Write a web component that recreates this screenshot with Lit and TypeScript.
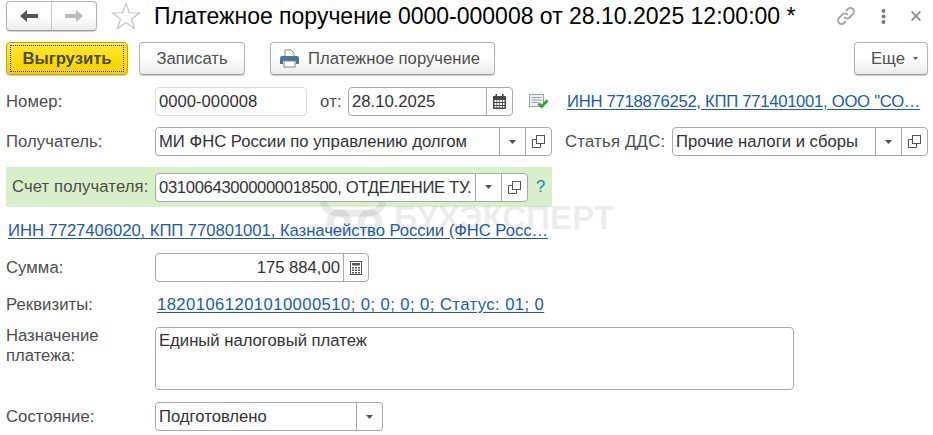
import { LitElement, html, css } from "lit";
import { customElement } from "lit/decorators.js";

const caret = html`<svg width="7" height="4" viewBox="0 0 7 4"><path d="M0 0h7L3.500 4z" fill="#555"/></svg>`;
const smallCaret = html`<svg width="5" height="3" viewBox="0 0 5 3"><path d="M0 0h5L2.500 3z" fill="#555"/></svg>`;
const openIcon = html`<svg width="13" height="13" viewBox="0 0 13 13" fill="none" stroke="#555" stroke-width="1"><path d="M4.500 4.500H.5v8h8V8.500"/><rect x="4.500" y=".5" width="8" height="8" fill="#fff"/></svg>`;
const calIcon = html`<svg width="13" height="15" viewBox="0 0 13 15"><path d="M2.500 0h1.600v2H9V0h1.600v2H12a1 1 0 0 1 1 1v11a1 1 0 0 1-1 1H1a1 1 0 0 1-1-1V3a1 1 0 0 1 1-1h1.500z" fill="#444"/><path d="M1.500 6h2v2h-2zM4.300 6h2v2h-2zM7 6h2v2H7zM9.800 6h1.800v2H9.800zM1.500 9h2v2h-2zM4.300 9h2v2h-2zM7 9h2v2H7zM9.800 9h1.800v2H9.800zM1.500 12h2v1.600h-2zM4.300 12h2v1.600h-2zM7 12h2v1.600H7zM9.800 12h1.800v1.600H9.800z" fill="#fff"/></svg>`;
const calcIcon = html`<svg width="12" height="14" viewBox="0 0 12 14"><rect x=".5" y=".5" width="11" height="13" fill="#fff" stroke="#555"/><rect x="2" y="2" width="8" height="2.500" fill="#555"/><path d="M2 6h2v1.500H2zM5 6h2v1.500H5zM8 6h2v1.500H8zM2 8.500h2V10H2zM5 8.500h2V10H5zM8 8.500h2V10H8zM2 11h2v1.500H2zM5 11h2v1.500H5zM8 11h2v1.500H8z" fill="#555"/></svg>`;

@customElement("app-root")
export class AppRoot extends LitElement {
  static styles = css`
    :host { display: block; position: relative; width: 933px; height: 435px; overflow: hidden; background: #fff;
      font-family: "Liberation Sans", Arial, sans-serif; font-size: 16.67px; color: #333; }
    .page { display: flex; flex-direction: column; padding: 1px 5px 0 6px; }
    .head { display: flex; align-items: center; height: 30px; }
    .nav { display: flex; width: 91px; height: 30px; box-sizing: border-box; border: 1px solid #b4b4b4; border-bottom-color: #9c9c9c; border-radius: 4px;
      background: linear-gradient(#fff, #fff 50%, #ececec); box-shadow: 0 1px 1px #ccc; }
    .nav div { flex: 1; display: flex; align-items: center; justify-content: center; }
    .nav div:first-child { border-right: 1px solid #c8c8c8; }
    .star { margin-left: 14px; }
    .title { margin-left: 13px; font-size: 23px; color: #000; white-space: nowrap; line-height: 30px; }
    .tools { margin-left: auto; display: flex; align-items: center; gap: 25px; padding-right: 7px; }
    .bar { display: flex; align-items: center; margin-top: 11px; height: 33px; }
    .btn { height: 33px; box-sizing: border-box; border: 1px solid #b4b4b4; border-bottom-color: #9f9f9f; border-radius: 4px; display: flex; align-items: center; justify-content: center;
      background: linear-gradient(#fff, #fff 45%, #ebebeb); color: #4d4d4d; box-shadow: 0 1px 1px #ccc; white-space: nowrap; }
    .default { width: 122px; position: relative; font-weight: bold; color: #4a4a4a; border-color: #c3a800; background: linear-gradient(#ffe93d, #ffdf00 50%, #f5cf00); }
    .default::after { content: ""; position: absolute; inset: 2px 3px; border: 1px dotted #2020e0; }
    .save { width: 106px; margin-left: 11px; }
    .print { width: 225px; margin-left: 25px; gap: 9px; justify-content: flex-start; padding-left: 9px; }
    .more { width: 74px; margin-left: auto; gap: 8px; justify-content: flex-start; padding-left: 16px; }
    .row { display: flex; align-items: center; height: 29px; margin-top: 11px; }
    .row.first { margin-top: 12px; }
    .label { width: 149px; color: #4d4d4d; flex: none; white-space: nowrap; letter-spacing: 0.08px; }
    .field { height: 29px; box-sizing: border-box; border: 1px solid #a9a9a9; border-radius: 4px; background: #fff; display: flex; align-items: stretch; flex: none; overflow: hidden; }
    .field.light { border-color: #dcdcdc; }
    .val { flex: 1; min-width: 0; padding: 0 3px; line-height: 27px; white-space: nowrap; overflow: hidden; }
    .acct { letter-spacing: -0.35px; }
    .right { text-align: right; }
    .sq { flex: none; width: 26px; border-left: 1px solid #a9a9a9; display: flex; align-items: center; justify-content: center; box-sizing: border-box; }
    .sq.narrow { width: 25px; }
    .link { color: #1a5cb0; text-decoration: underline; white-space: nowrap; text-underline-offset: 2px; }
    .caps { color: #4d4d4d; white-space: nowrap; flex: none; letter-spacing: 0.25px; }
    .from { margin-left: 13px; width: 28px; }
    .dds { margin-left: 13px; width: 107px; }
    .inn { margin-left: 18px; letter-spacing: -0.28px; }
    .status { margin-left: 16px; flex: none; }
    .green { display: flex; align-items: center; height: 40px; margin-top: 11px; width: 546px; background: #d7f0c9; }
    .green .label { padding-left: 6px; width: 143px; letter-spacing: 0.12px; }
    .q { color: #1a82b8; margin-left: 8px; }
    .linkrow { height: 18px; margin-top: 15px; padding-left: 2px; line-height: 18px; }
    .linkrow .link { letter-spacing: -0.05px; }
    .sumrow { margin-top: 13px; }
    .plain { display: flex; align-items: center; height: 18px; margin-top: 14px; }
    .req { margin-left: 2px; letter-spacing: 0.42px; }
    .area-row { display: flex; margin-top: 13px; height: 63px; }
    .area-label { width: 149px; line-height: 20px; color: #4d4d4d; margin-top: -1px; }
    .area { width: 639px; height: 63px; box-sizing: border-box; border: 1px solid #a9a9a9; border-radius: 4px; padding: 3px; line-height: 20px; }
    .state { margin-top: 12px; }
    .wm { position: absolute; z-index: 2; left: 320px; top: 198px; display: flex; align-items: center; gap: 10px; color: rgba(60, 60, 80, 0.1); font-weight: bold; font-size: 33px; line-height: 38px; pointer-events: none; }
    .wm span { letter-spacing: 0.1px; margin-top: 1px; margin-left: -2px; }
  `;

  render() {
    return html`
      <div class="wm">
        <svg width="66" height="36" viewBox="0 0 66 36" fill="none" stroke="rgba(60,60,80,0.1)" stroke-width="7"><circle cx="19" cy="22" r="9"/><circle cx="50" cy="22" r="9"/><path d="M3 2c2 8 9 11 17 11h26c8 0 15-3 17-11"/></svg>
        <span>БУХЭКСПЕРТ</span>
      </div>
      <div class="page">
        <div class="head">
          <div class="nav">
            <div><svg width="18" height="14" viewBox="0 0 18 14"><path d="M0 7 7 1v4h11v4H7v4z" fill="#555"/></svg></div>
            <div><svg width="18" height="14" viewBox="0 0 18 14"><path d="M18 7 11 1v4H0v4h11v4z" fill="#b9b9b9"/></svg></div>
          </div>
          <svg class="star" width="30" height="28" viewBox="0 0 30 28" fill="#fff" stroke="#c4c4c4" stroke-width="1.200"><path d="M15 1.500 18.500 11H28.500L20.500 17 23.500 26.500 15 20.800 6.500 26.500 9.500 17 1.500 11H11.500z"/></svg>
          <div class="title">Платежное поручение 0000-000008 от 28.10.2025 12:00:00 *</div>
          <div class="tools">
            <svg width="20" height="20" viewBox="0 0 20 20" fill="none" stroke="#a6a6a6" stroke-width="1.800" stroke-linecap="round"><path d="M8.500 11.500a3.500 3.500 0 0 0 5 0l3.500-3.500a3.500 3.500 0 0 0-5-5L10.500 4.500"/><path d="M11.500 8.500a3.500 3.500 0 0 0-5 0L3 12a3.500 3.500 0 0 0 5 5l1.500-1.500"/></svg>
            <svg width="5" height="15" viewBox="0 0 5 15" fill="#7d7d7d"><circle cx="2.500" cy="2" r="2"/><circle cx="2.500" cy="7.500" r="2"/><circle cx="2.500" cy="13" r="2"/></svg>
            <svg width="10" height="10" viewBox="0 0 10 10" stroke="#8a8a8a" stroke-width="1.800"><path d="M.7.7l8.600 8.600M9.300.7.700 9.300"/></svg>
          </div>
        </div>

        <div class="bar">
          <div class="btn default">Выгрузить</div>
          <div class="btn save">Записать</div>
          <div class="btn print">
            <svg width="19" height="19" viewBox="0 0 19 19"><path d="M5 1h6l3 3v4H5z" fill="#fff" stroke="#7d8a96"/><path d="M2 7h15a2 2 0 0 1 2 2v6h-3v-3H3v3H0V9a2 2 0 0 1 2-2z" fill="#4d7596"/><rect x="4" y="12" width="11" height="6" fill="#fff" stroke="#7d8a96"/></svg>
            <span>Платежное поручение</span>
          </div>
          <div class="btn more"><span>Еще</span>${smallCaret}</div>
        </div>

        <div class="row first">
          <div class="label">Номер:</div>
          <div class="field light" style="width:152px"><div class="val">0000-000008</div></div>
          <div class="caps from">от:</div>
          <div class="field" style="width:165px"><div class="val">28.10.2025</div><div class="sq">${calIcon}</div></div>
          <svg class="status" width="20" height="16" viewBox="0 0 20 16"><rect x=".5" y=".5" width="14" height="12" fill="#eef1f3" stroke="#98a2a9"/><path d="M2.500 3.500h10M2.500 6h10M2.500 8.500h7" stroke="#98a2a9"/><path d="M8.500 10.500l2-2 2 2L17.500 5.500 19.500 7.500l-7 7z" fill="#2fa533"/></svg>
          <a class="link inn">ИНН 7718876252, КПП 771401001, ООО "СО…</a>
        </div>

        <div class="row">
          <div class="label">Получатель:</div>
          <div class="field" style="width:397px"><div class="val">МИ ФНС России по управлению долгом</div><div class="sq">${caret}</div><div class="sq">${openIcon}</div></div>
          <div class="caps dds">Статья ДДС:</div>
          <div class="field" style="width:256px"><div class="val">Прочие налоги и сборы</div><div class="sq">${caret}</div><div class="sq">${openIcon}</div></div>
        </div>

        <div class="green">
          <div class="label">Счет получателя:</div>
          <div class="field" style="width:373px"><div class="val acct">03100643000000018500, ОТДЕЛЕНИЕ ТУ.</div><div class="sq">${caret}</div><div class="sq">${openIcon}</div></div>
          <span class="q">?</span>
        </div>

        <div class="linkrow"><a class="link">ИНН 7727406020, КПП 770801001, Казначейство России (ФНС Росс…</a></div>

        <div class="row sumrow">
          <div class="label">Сумма:</div>
          <div class="field" style="width:214px"><div class="val right">175 884,00</div><div class="sq narrow">${calcIcon}</div></div>
        </div>

        <div class="plain">
          <div class="label">Реквизиты:</div>
          <a class="link req">18201061201010000510; 0; 0; 0; 0; Статус: 01; 0</a>
        </div>

        <div class="area-row">
          <div class="area-label">Назначение<br />платежа:</div>
          <div class="area">Единый налоговый платеж</div>
        </div>

        <div class="row state">
          <div class="label">Состояние:</div>
          <div class="field" style="width:228px"><div class="val">Подготовлено</div><div class="sq">${caret}</div></div>
        </div>
      </div>
    `;
  }
}
